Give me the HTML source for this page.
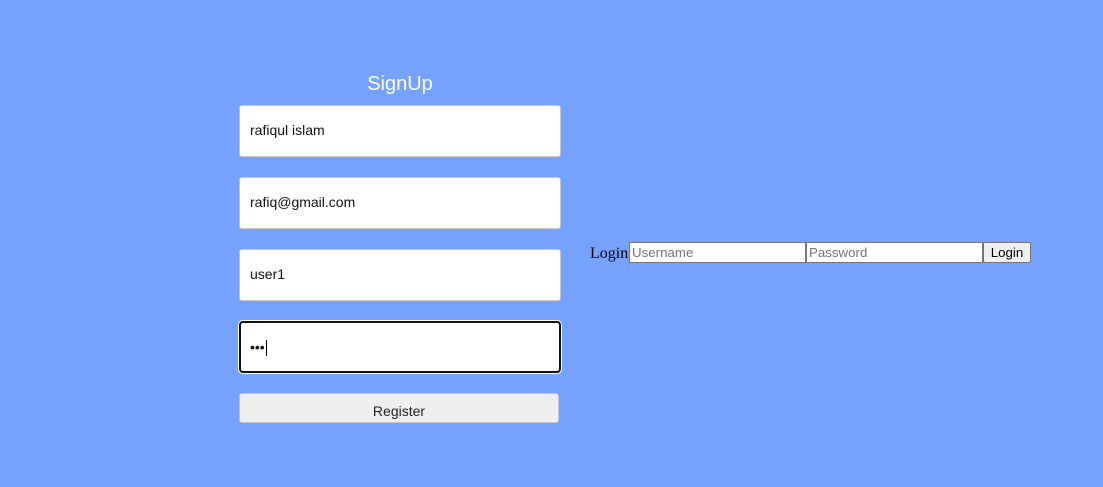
<!DOCTYPE html>
<html><head><meta charset="utf-8"><style>
html,body{margin:0;padding:0}
body{width:1103px;height:487px;background:#76a2ff;position:relative;overflow:hidden;font-family:"Liberation Sans",Arial,sans-serif}
.t{position:absolute;left:239px;width:322px;top:73px;text-align:center;color:#fff;font-size:20px}
.in{position:absolute;left:239px;width:320px;height:50px;background:#fff;border:1px solid #c8c8c8;border-radius:3px;box-sizing:content-box;font-size:14px;color:#111;line-height:49px;text-indent:10px}
.act{border:2px solid #111;width:318px;height:48px;line-height:48px;text-indent:9px;border-radius:4px;box-shadow:0 0 0 1px #fff}
.btn{position:absolute;left:239px;top:393px;width:318px;height:28px;background:#efefef;border:1px solid #c6c6c6;border-radius:3px;text-align:center;line-height:34px;font-size:14px;color:#222}
.lab{position:absolute;left:590px;top:245px;font-family:"Liberation Serif",serif;font-size:16px;color:#000}
.sm{position:absolute;top:242px;height:19px;background:#fff;border:1px solid #767676;font-size:13.3px;color:#757575;line-height:19px;text-indent:2px}
.lb{position:absolute;left:983px;top:242px;width:46px;height:19px;background:#efefef;border:1px solid #767676;border-radius:2px;font-size:13.3px;text-align:center;line-height:19px;color:#000}
</style></head><body>
<div class="t">SignUp</div>
<div class="in" style="top:105px">rafiqul islam</div>
<div class="in" style="top:177px">rafiq@gmail.com</div>
<div class="in" style="top:249px">user1</div>
<div class="in act" style="top:321px">•••<span style="display:inline-block;width:1px;height:16px;background:#000;vertical-align:middle;margin-left:1px"></span></div>
<div class="btn">Register</div>
<div class="lab">Login</div>
<div class="sm" style="left:629px;width:175px">Username</div>
<div class="sm" style="left:806px;width:175px">Password</div>
<div class="lb">Login</div>
</body></html>
